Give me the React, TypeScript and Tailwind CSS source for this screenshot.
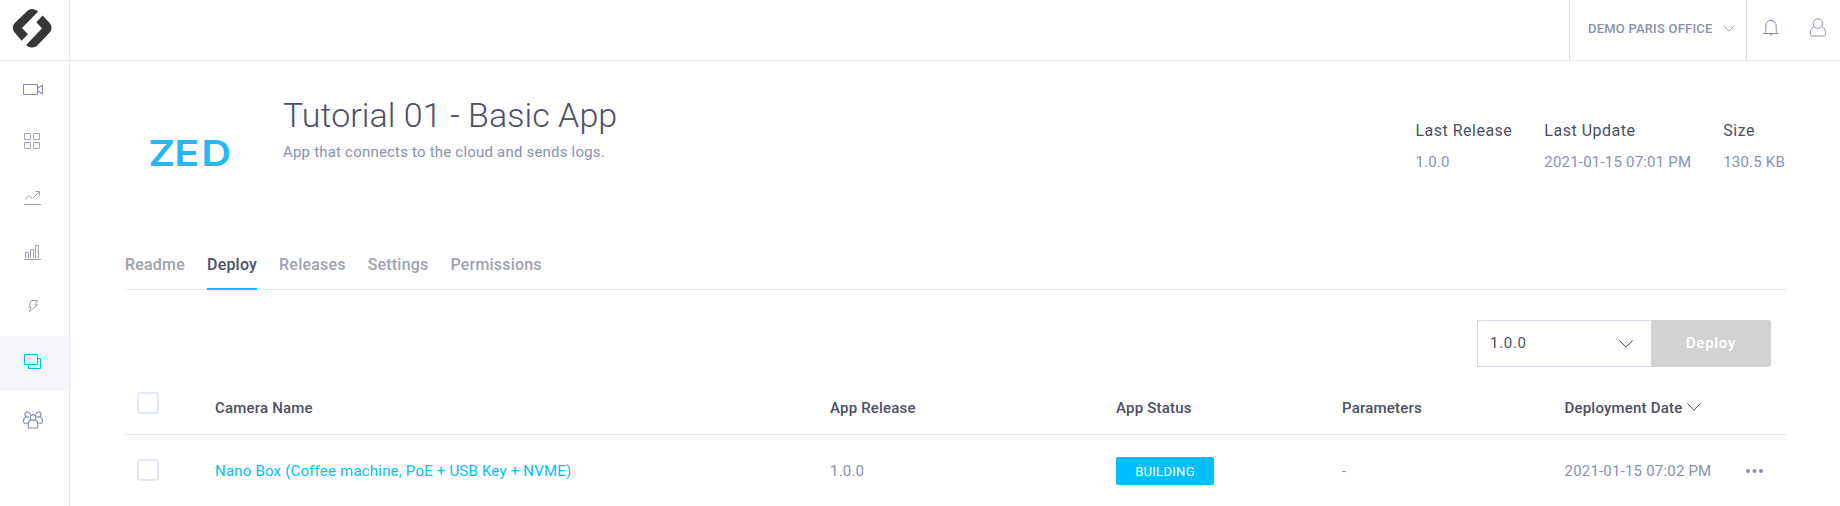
import type { ReactNode } from "react";

function Icon({ w, h, className = "", sw = 1, children }: { w: number; h: number; className?: string; sw?: number; children: ReactNode }) {
  return (
    <svg width={w} height={h} viewBox={`0 0 ${w} ${h}`} fill="none" stroke="currentColor" strokeWidth={sw} className={`shrink-0 ${className}`}>
      {children}
    </svg>
  );
}

const CameraIcon = () => (
  <Icon w={20} h={12} sw={1.1} className="mt-[2px] ml-[-3px] text-[#8388ae]">
    <rect x="0.5" y="0.5" width="14" height="10" rx="1" />
    <path d="M15 4 19.400 1.300V9.700L15 7.200" />
  </Icon>
);

const GridIcon = () => (
  <Icon w={17} h={16} className="mt-[-5px] ml-[-4px] text-[#a3a3b0]">
    <path d="M.5.5h6v6h-6zM9.500.5h6v6h-6zM.5 9.500h6v6h-6zM9.500 9.500h6v6h-6z" />
  </Icon>
);

const TrendIcon = () => (
  <Icon w={17} h={14} className="ml-[-4px] mt-[-1px] text-[#a3a3b0]">
    <path d="M0 13.500h17" />
    <path d="M1 8.500 4.800 4.800 8.300 7.600 15 1M11.500.5h4v4" />
  </Icon>
);

const BarsIcon = () => (
  <Icon w={17} h={15} className="ml-[-4px] mt-[-2px] text-[#a3a3b0]">
    <path d="M0 14.500h17M1.500 13V7.500h3V13M6.500 13V4.500h3V13M11.500 13V.5h3V13" />
  </Icon>
);

const BoltIcon = () => (
  <Icon w={11} h={13} className="ml-[-3px] mt-[-5px] text-[#a0a0ad]">
    <path d="M3 .5H9.500L7 4.700H9.500L1.200 12 3 7.300H1z" strokeLinejoin="round" />
  </Icon>
);

const WindowsIcon = () => (
  <Icon w={18} h={15} className="ml-[-3px] mt-[-4px] text-[#00bfff]">
    <path d="M.5.5h13v10H.5zM14 4.500h2.500v10h-12V11.500" />
  </Icon>
);

const PeopleIcon = () => (
  <Icon w={20} h={18} sw={1.1} className="ml-[-3px] mt-[2px] text-[#8388ae]">
    <circle cx="10" cy="6.500" r="2.900" />
    <path d="M7.800 9.300C5.900 9.800 5.200 11.200 5.200 13.200V15.700Q5.200 17 6.500 17H13.500Q14.800 17 14.800 15.700V13.200C14.800 11.200 14.100 9.800 12.200 9.300" />
    <path d="M7 3.500A2.500 2.500 0 1 0 3.300 5.600C1.500 6.300.6 7.500.6 9.500V11Q.6 12.200 1.700 12.200H4.600M3.300 5.700Q4.800 6.500 6.300 5.600" />
    <path d="M13 3.500A2.500 2.500 0 1 1 16.700 5.600C18.500 6.300 19.400 7.500 19.400 9.500V11Q19.400 12.200 18.300 12.200H15.400M16.700 5.700Q15.200 6.500 13.700 5.600" />
  </Icon>
);

const BellIcon = () => (
  <Icon w={16} h={18} className="text-[#8388ae]">
    <path d="M.5 14.500h15M1.800 14.300C2.600 13 2.800 12 2.800 10V7C2.800 3.500 4.800 1.500 8 1.500S13.200 3.500 13.200 7V10C13.200 12 13.400 13 14.200 14.300M8 .1V1.500M6.700 15.200Q8 17.200 9.300 15.200" />
  </Icon>
);

const UserIcon = () => (
  <Icon w={16} h={19} className="text-[#9696a6]">
    <circle cx="8" cy="5.600" r="4.800" />
    <path d="M4.200 8.600C1.700 9.600.6 11.500.6 14V16.500Q.6 18 2 18H14Q15.400 18 15.400 16.500V14C15.400 11.500 14.300 9.600 11.800 8.600" />
  </Icon>
);

const Chevron = ({ w, h, className }: { w: number; h: number; className: string }) => (
  <Icon w={w} h={h} className={className}>
    <path d={`M.4.400 ${w / 2} ${h - 0.8} ${w - 0.4}.400`} />
  </Icon>
);

const BrandMark = () => (
  <svg width="40" height="40" viewBox="0 0 40 40" fill="#363636" className="mt-[-4px] ml-[-5px]">
    <path d="M26.200 3.500C22.500.2 18.300.1 15.200 3L3.300 14.500C-.1 18 0 21.600 3.100 25L9.600 32.700 15.900 26.200 10 20z" />
    <path d="M30.700 7.600 37 14.200C40.500 18 40.400 21.700 37 25.200L25.500 37.200C22.500 40.200 18 40.300 14.200 36.900L30 20.200 24.300 14.300z" />
  </svg>
);

const nav = [CameraIcon, GridIcon, TrendIcon, BarsIcon, BoltIcon, WindowsIcon, PeopleIcon];

function Sidebar() {
  return (
    <aside className="flex w-[70px] shrink-0 flex-col border-r border-[#e4e8f5]">
      <div className="flex h-[61px] items-center justify-center border-b border-[#e4e8f5]">
        <BrandMark />
      </div>
      {nav.map((NavIcon, i) => (
        <a key={i} className={`flex h-[55px] items-center justify-center ${i === 5 ? "bg-[#f4f6fb]" : ""}`}>
          <NavIcon />
        </a>
      ))}
    </aside>
  );
}

function TopBar() {
  return (
    <header className="flex h-[61px] justify-end border-b border-[#e4e8f5] text-[#8a90b3]">
      <div className="flex w-[178px] items-center border-x border-[#dcdfe8] pb-[3px] pl-[18px]">
        <span className="text-[13px] font-medium tracking-[0.2px] whitespace-nowrap">DEMO PARIS OFFICE</span>
        <Chevron w={12} h={7} className="mr-[11px] ml-auto text-[#a0a4c0]" />
      </div>
      <div className="flex w-[93px] items-center justify-between pr-[14px] pb-[5px] pl-[16px]">
        <BellIcon />
        <UserIcon />
      </div>
    </header>
  );
}

function Stat({ label, value }: { label: string; value: string }) {
  return (
    <div className="whitespace-nowrap">
      <div className="text-[16px] leading-[31px] tracking-[0.5px] text-[#4c4f66]">{label}</div>
      <div className="pt-px text-[15px] leading-[31px] tracking-[0.2px] text-[#8a90b3]">{value}</div>
    </div>
  );
}

const Checkbox = () => <span className="block size-[22px] rounded-[3px] border-2 border-[#e4e9f6]" />;

const columns = "grid grid-cols-[90px_615px_286px_226px_182px_1fr] items-center";

export default function App() {
  return (
    <div className="flex h-[506px] w-[1840px] overflow-hidden bg-white font-[Roboto,sans-serif]">
      <Sidebar />
      <main className="flex min-w-0 flex-1 flex-col">
        <TopBar />
        <div className="flex flex-col pr-[54px] pl-[55px]">
          <section className="flex h-[178px] items-start">
            <svg width="90" height="50" viewBox="0 0 90 50" className="mt-[66px] ml-[22px]" fill="#29b6f6" fontFamily="Inter, sans-serif" fontWeight="600" fontSize="36">
              <text x="1 23.700 47.200" y="39" transform="scale(1.15 1)">ZED</text>
            </svg>
            <div className="ml-[46px] pt-[31px]">
              <h1 className="text-[34px] leading-[46px] font-light tracking-[0.05px] text-[#4c4f66]">Tutorial 01 - Basic App</h1>
              <p className="pt-px text-[15px] leading-[26px] tracking-[0.2px] text-[#8a90b3]">App that connects to the cloud and sends logs.</p>
            </div>
            <div className="ml-auto flex gap-[32px] pt-[54px] pr-px">
              <Stat label="Last Release" value="1.0.0" />
              <Stat label="Last Update" value="2021-01-15 07:01 PM" />
              <Stat label="Size" value="130.5 KB" />
            </div>
          </section>

          <nav className="flex h-[51px] gap-[22px] border-b border-[#e6e8f2] text-[16px] leading-[52px] font-medium tracking-[0.2px] text-[#a0a2b0]">
            <a>Readme</a>
            <a className="h-[51px] border-b-[2px] border-[#00bfff] text-[#4c4f66]">Deploy</a>
            <a>Releases</a>
            <a>Settings</a>
            <a>Permissions</a>
          </nav>

          <div className="mt-[30px] flex justify-end pr-[15px]">
            <div className="flex h-[47px] w-[174px] items-center justify-between border border-r-0 border-[#d5dcec] pr-[18px] pl-[12px] text-[15px] tracking-[0.7px] text-[#4c4f66]">
              1.0.0
              <Chevron w={14} h={8} className="text-[#4c4f66]" />
            </div>
            <button className="h-[47px] w-[120px] rounded-r-[3px] bg-[#d2d2d2] text-[15px] font-medium tracking-[0.7px] text-white">Deploy</button>
          </div>

          <div className={`${columns} h-[68px] border-b border-[#e4e9f3] pt-[16px] text-[15px] font-medium tracking-[0.2px] text-[#4c4f66]`}>
            <div className="-mt-[12px] pl-[12px]"><Checkbox /></div>
            <div>Camera Name</div>
            <div>App Release</div>
            <div>App Status</div>
            <div>Parameters</div>
            <div className="ml-[40.5px] flex items-center gap-[5px] whitespace-nowrap">
              Deployment Date
              <Chevron w={14} h={8} className="mt-[-4px] text-[#4c4f66]" />
            </div>
          </div>

          <div className={`${columns} h-[71px] pt-px text-[15px] tracking-[0.2px] text-[#8a90b3]`}>
            <div className="-mt-[2px] pl-[12px]"><Checkbox /></div>
            <div className="pt-px text-[#00bfff]">Nano Box (Coffee machine, PoE + USB Key + NVME)</div>
            <div className="pt-px">1.0.0</div>
            <div>
              <span className="flex h-[28px] w-[98px] items-center justify-center rounded-[2px] bg-[#00bfff] pt-px text-[13px] tracking-[0.3px] text-white">BUILDING</span>
            </div>
            <div className="pt-px">-</div>
            <div className="flex items-center justify-between pt-px pr-[23px] pl-[40.5px] whitespace-nowrap">
              2021-01-15 07:02 PM
              <svg width="17" height="4" viewBox="0 0 17 4" fill="#8b91a8" className="mt-[-2px]">
                <circle cx="2" cy="2" r="2" />
                <circle cx="8.500" cy="2" r="2" />
                <circle cx="15" cy="2" r="2" />
              </svg>
            </div>
          </div>
        </div>
      </main>
    </div>
  );
}
